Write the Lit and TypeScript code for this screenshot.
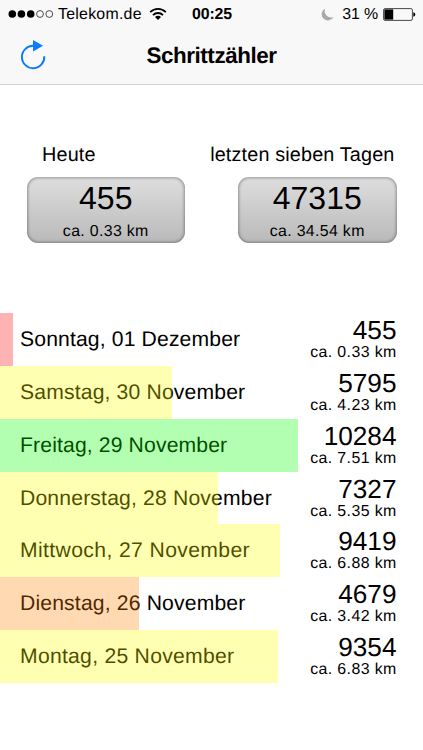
import { LitElement, html, css } from "lit";
import { customElement, property } from "lit/decorators.js";

type Tone = "red" | "orange" | "yellow" | "green";

interface Day {
  label: string;
  tracking: number;
  steps: number;
  km: string;
  bar: number;
  tone: Tone;
}

const DAYS: Day[] = [
  { label: "Sonntag, 01 Dezember", tracking: 0.14, steps: 455, km: "0.33", bar: 13.2, tone: "red" },
  { label: "Samstag, 30 November", tracking: 0.16, steps: 5795, km: "4.23", bar: 172, tone: "yellow" },
  { label: "Freitag, 29 November", tracking: 0.14, steps: 10284, km: "7.51", bar: 297.5, tone: "green" },
  { label: "Donnerstag, 28 November", tracking: 0.17, steps: 7327, km: "5.35", bar: 218, tone: "yellow" },
  { label: "Mittwoch, 27 November", tracking: 0.38, steps: 9419, km: "6.88", bar: 280, tone: "yellow" },
  { label: "Dienstag, 26 November", tracking: 0.16, steps: 4679, km: "3.42", bar: 139, tone: "orange" },
  { label: "Montag, 25 November", tracking: 0.27, steps: 9354, km: "6.83", bar: 277.7, tone: "yellow" },
];

@customElement("status-bar")
export class StatusBar extends LitElement {
  static styles = css`
    :host {
      display: grid;
      grid-template-columns: 1fr auto 1fr;
      align-items: center;
      height: 28px;
      padding: 0 7px 0 8px;
      font-size: 15.9px;
      line-height: 28px;
    }
    .left, .right { display: flex; align-items: center; height: 28px; }
    .right { justify-content: flex-end; }
    .carrier, .charge, .time { line-height: 26px; padding-top: 2px; }
    .carrier { margin-left: 4px; letter-spacing: 0.25px; }
    .wifi { margin-left: 7px; }
    .time { font-weight: bold; letter-spacing: -0.1px; }
    .charge { margin: 0 5px 0 8px; letter-spacing: -0.1px; }
    svg { display: block; flex: none; }
  `;
  render() {
    return html`
      <div class="left">
        <svg width="46" height="10" viewBox="0 0 46 10">
          <g fill="#000"><circle cx="4.3" cy="5" r="3.8"/><circle cx="13.4" cy="5" r="3.8"/><circle cx="22.7" cy="5" r="3.8"/></g>
          <g fill="none" stroke="#222" stroke-width=".8"><circle cx="32" cy="5" r="3.4"/><circle cx="41.3" cy="5" r="3.4"/></g>
        </svg>
        <span class="carrier">Telekom.de</span>
        <svg class="wifi" width="18" height="14" viewBox="0 0 18 14">
          <g fill="none" stroke="#000" stroke-width="1.8">
            <path d="M1.2 5.2A11 11 0 0 1 16.8 5.2"/>
            <path d="M4 8.1A7 7 0 0 1 14 8.1"/>
          </g>
          <path d="M6 10.1A4.2 4.2 0 0 1 12 10.1L9 13Z"/>
        </svg>
      </div>
      <div class="time">00:25</div>
      <div class="right">
        <svg width="13" height="13" viewBox="0 0 13 13"><path fill="#a9a9a9" d="M4.3.4A6.3 6.3 0 1 0 12.6 9 6.4 6.4 0 0 1 4.3.4Z"/></svg>
        <span class="charge">31 %</span>
        <svg width="33" height="13" viewBox="0 0 33 13">
          <rect x=".6" y=".6" width="28.8" height="11.8" rx="1.5" fill="none" stroke="#333" stroke-width=".9"/>
          <rect x="1.4" y="1.4" width="8.8" height="10.2"/>
          <path d="M30.3 4.3Q32.3 4.7 32.3 6.5T30.3 8.7Z"/>
        </svg>
      </div>
    `;
  }
}

@customElement("step-card")
export class StepCard extends LitElement {
  @property() steps = "";
  @property() km = "";
  static styles = css`
    :host { display: flex; flex-direction: column; align-items: flex-end; width: 158.5px; }
    .caption {
      height: 24px;
      line-height: 26px;
      font-size: 19.83px;
      white-space: nowrap;
      margin-bottom: 11px;
      padding-right: 2px;
      letter-spacing: 0.14px;
    }
    :host(.today) .caption { align-self: flex-start; padding-left: 15.5px; }
    .box {
      box-sizing: border-box;
      width: 158.5px;
      height: 66px;
      border-radius: 11px;
      background: linear-gradient(#dedede, #b9b9b9);
      box-shadow: inset 0 0 3px 1px rgba(0, 0, 0, 0.32);
      text-align: center;
    }
    .steps { height: 40px; line-height: 42px; font-size: 32px; }
    .km { line-height: 29px; font-size: 15.9px; letter-spacing: 0.33px; }
  `;
  render() {
    return html`
      <div class="caption"><slot></slot></div>
      <div class="box">
        <div class="steps">${this.steps}</div>
        <div class="km">ca. ${this.km} km</div>
      </div>
    `;
  }
}

@customElement("app-root")
export class AppRoot extends LitElement {
  static styles = css`
    :host {
      display: block;
      height: 750px;
      overflow: hidden;
      background: #fff;
      color: #000;
      font-family: "Liberation Sans", Arial, sans-serif;
      text-rendering: geometricPrecision;
    }
    header {
      box-sizing: border-box;
      height: 85px;
      background: #f8f8f8;
      border-bottom: 1px solid #d2d2d2;
    }
    .nav {
      display: grid;
      grid-template-columns: 1fr auto 1fr;
      align-items: center;
      height: 56px;
    }
    .refresh { display: block; margin-left: 20px; }
    h1 { margin: 0; font-size: 22.4px; line-height: 56px; letter-spacing: -0.42px; }
    .summary {
      display: flex;
      justify-content: space-between;
      padding: 57px 26.5px 0;
    }
    .days { padding-top: 70px; }
    .day {
      position: relative;
      display: flex;
      justify-content: space-between;
      height: 52.86px;
      padding: 0 26.5px 0 20px;
    }
    .label { height: 52px; font-size: 21.15px; line-height: 54.8px; white-space: nowrap; }
    .value { text-align: right; }
    .steps { height: 30px; line-height: 34.6px; font-size: 26.2px; }
    .km { line-height: 20px; font-size: 15.9px; letter-spacing: 0.4px; margin-right: -0.2px; }
    .bar { position: absolute; left: 0; top: 0; bottom: 0; opacity: 0.3; }
    .red { background: #f00; }
    .orange { background: #ff8000; }
    .yellow { background: #ff0; }
    .green { background: #0f0; }
  `;
  render() {
    return html`
      <header>
        <status-bar></status-bar>
        <div class="nav">
          <svg class="refresh" width="27" height="32" viewBox="0 0 27 32">
            <path d="M13.3 5.8A11.2 11.2 0 1 0 24.3 16.2" fill="none" stroke="#0a7aff" stroke-width="1.9"/>
            <path d="M13 0L23 5.8 13 11.6Z" fill="#0a7aff"/>
          </svg>
          <h1>Schrittzähler</h1>
        </div>
      </header>
      <section class="summary">
        <step-card class="today" steps="455" km="0.33">Heute</step-card>
        <step-card steps="47315" km="34.54">letzten sieben Tagen</step-card>
      </section>
      <section class="days">
        ${DAYS.map(
          (d) => html`
            <div class="day">
              <div class="label" style="letter-spacing:${d.tracking}px">${d.label}</div>
              <div class="value">
                <div class="steps">${d.steps}</div>
                <div class="km">ca. ${d.km} km</div>
              </div>
              <div class="bar ${d.tone}" style="width:${d.bar}px"></div>
            </div>
          `
        )}
      </section>
    `;
  }
}
